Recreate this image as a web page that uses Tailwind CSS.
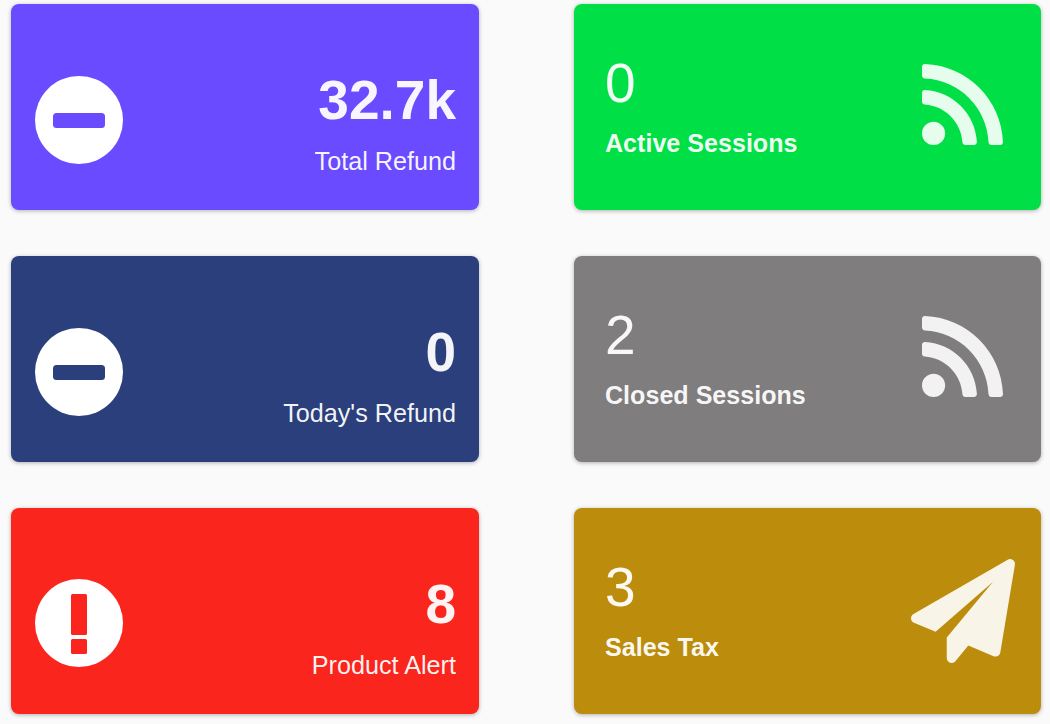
<!DOCTYPE html>
<html lang="en">
<head>
  <meta charset="UTF-8" />
  <title>Dashboard</title>
  <script src="https://cdn.jsdelivr.net/npm/@tailwindcss/browser@4"></script>
</head>
<body class="bg-[#fafafa] h-[724px] overflow-hidden font-['Liberation_Sans',Arial,sans-serif]">
  <div class="grid grid-cols-[468px_467px] gap-x-[95px] gap-y-[46px] pl-[11px] pt-[4px]">

    <div class="h-[206px] rounded-lg bg-[#6a4bff] shadow-[0_1px_4px_rgba(0,0,0,0.3)] flex items-center justify-between pl-6 pr-[23px] text-white/95">
      <svg class="w-[88px] h-[88px] mt-[26px]" viewBox="0 0 88 88"><circle cx="44" cy="44" r="44" fill="#fff"/><rect x="18" y="37" width="52" height="15" rx="3.5" fill="#6a4bff"/></svg>
      <div class="text-right pt-[30px]">
        <div class="text-[55px] leading-[62px] font-bold">32.7k</div>
        <div class="text-[25.2px] leading-[30px] mt-[15px]">Total Refund</div>
      </div>
    </div>

    <div class="h-[206px] rounded-lg bg-[#00e046] shadow-[0_1px_4px_rgba(0,0,0,0.3)] flex items-center justify-between pl-[31px] pr-[38px] text-white/95">
      <div class="pb-[4px]">
        <div class="text-[55px] leading-[62px]">0</div>
        <div class="text-[25.1px] leading-[30px] font-bold mt-[14px]">Active Sessions</div>
      </div>
      <svg class="w-[81px] h-[81px] mb-[6px] text-white/90" viewBox="0 32 448 448" fill="currentColor"><path d="M128.081 415.959c0 35.369-28.672 64.041-64.041 64.041S0 451.328 0 415.959s28.672-64.041 64.041-64.041 64.04 28.673 64.04 64.041zm175.66 47.25c-8.354-154.6-132.185-278.587-286.95-286.95C7.656 175.765 0 183.105 0 192.253v48.069c0 8.415 6.49 15.472 14.887 16.018 111.832 7.284 201.473 96.702 208.772 208.772.547 8.397 7.604 14.887 16.018 14.887h48.069c9.149.001 16.489-7.655 15.995-16.79zm144.249.288C439.596 229.677 251.465 40.445 16.503 32.01 7.473 31.686 0 38.981 0 48.016v48.068c0 8.625 6.835 15.645 15.453 15.999 191.179 7.839 344.627 161.316 352.465 352.465.353 8.618 7.373 15.453 15.999 15.453h48.068c9.034-.001 16.329-7.474 16.005-16.504z"/></svg>
    </div>

    <div class="h-[206px] rounded-lg bg-[#2a3f7b] shadow-[0_1px_4px_rgba(0,0,0,0.3)] flex items-center justify-between pl-6 pr-[23px] text-white/95">
      <svg class="w-[88px] h-[88px] mt-[26px]" viewBox="0 0 88 88"><circle cx="44" cy="44" r="44" fill="#fff"/><rect x="18" y="37" width="52" height="15" rx="3.5" fill="#2a3f7b"/></svg>
      <div class="text-right pt-[30px]">
        <div class="text-[55px] leading-[62px] font-bold">0</div>
        <div class="text-[25.2px] leading-[30px] mt-[15px]">Today's Refund</div>
      </div>
    </div>

    <div class="h-[206px] rounded-lg bg-[#7f7d7d] shadow-[0_1px_4px_rgba(0,0,0,0.3)] flex items-center justify-between pl-[31px] pr-[38px] text-white/95">
      <div class="pb-[4px]">
        <div class="text-[55px] leading-[62px]">2</div>
        <div class="text-[25.1px] leading-[30px] font-bold mt-[14px]">Closed Sessions</div>
      </div>
      <svg class="w-[81px] h-[81px] mb-[6px] text-white/90" viewBox="0 32 448 448" fill="currentColor"><path d="M128.081 415.959c0 35.369-28.672 64.041-64.041 64.041S0 451.328 0 415.959s28.672-64.041 64.041-64.041 64.04 28.673 64.04 64.041zm175.66 47.25c-8.354-154.6-132.185-278.587-286.95-286.95C7.656 175.765 0 183.105 0 192.253v48.069c0 8.415 6.49 15.472 14.887 16.018 111.832 7.284 201.473 96.702 208.772 208.772.547 8.397 7.604 14.887 16.018 14.887h48.069c9.149.001 16.489-7.655 15.995-16.79zm144.249.288C439.596 229.677 251.465 40.445 16.503 32.01 7.473 31.686 0 38.981 0 48.016v48.068c0 8.625 6.835 15.645 15.453 15.999 191.179 7.839 344.627 161.316 352.465 352.465.353 8.618 7.373 15.453 15.999 15.453h48.068c9.034-.001 16.329-7.474 16.005-16.504z"/></svg>
    </div>

    <div class="h-[206px] rounded-lg bg-[#fa251d] shadow-[0_1px_4px_rgba(0,0,0,0.3)] flex items-center justify-between pl-6 pr-[23px] text-white/95">
      <svg class="w-[88px] h-[88px] mt-[24px]" viewBox="0 0 88 88"><circle cx="44" cy="44" r="44" fill="#fff"/><rect x="36" y="15" width="16" height="41" rx="1.5" fill="#fa251d"/><rect x="36" y="60" width="16" height="15" rx="1.5" fill="#fa251d"/></svg>
      <div class="text-right pt-[30px]">
        <div class="text-[55px] leading-[62px] font-bold">8</div>
        <div class="text-[25.2px] leading-[30px] mt-[15px]">Product Alert</div>
      </div>
    </div>

    <div class="h-[206px] rounded-lg bg-[#bc8c0d] shadow-[0_1px_4px_rgba(0,0,0,0.3)] flex items-center justify-between pl-[31px] pr-[26px] text-white/95">
      <div class="pb-[4px]">
        <div class="text-[55px] leading-[62px]">3</div>
        <div class="text-[25.1px] leading-[30px] font-bold mt-[14px]">Sales Tax</div>
      </div>
      <svg class="w-[104px] h-[104px] text-white/90" viewBox="0 0 512 512" fill="currentColor"><path d="M476 3.2L12.5 270.6c-18.1 10.4-15.8 35.6 2.2 43.2L121 358.4 404 112 176 386v101.5c0 23.6 28.5 32.9 42.5 15.8L282 426l124.6 52.2c14.2 6 30.4-2.9 33-18.2l72-432C515 7.8 493.3-6.8 476 3.2z"/></svg>
    </div>

  </div>
</body>
</html>
